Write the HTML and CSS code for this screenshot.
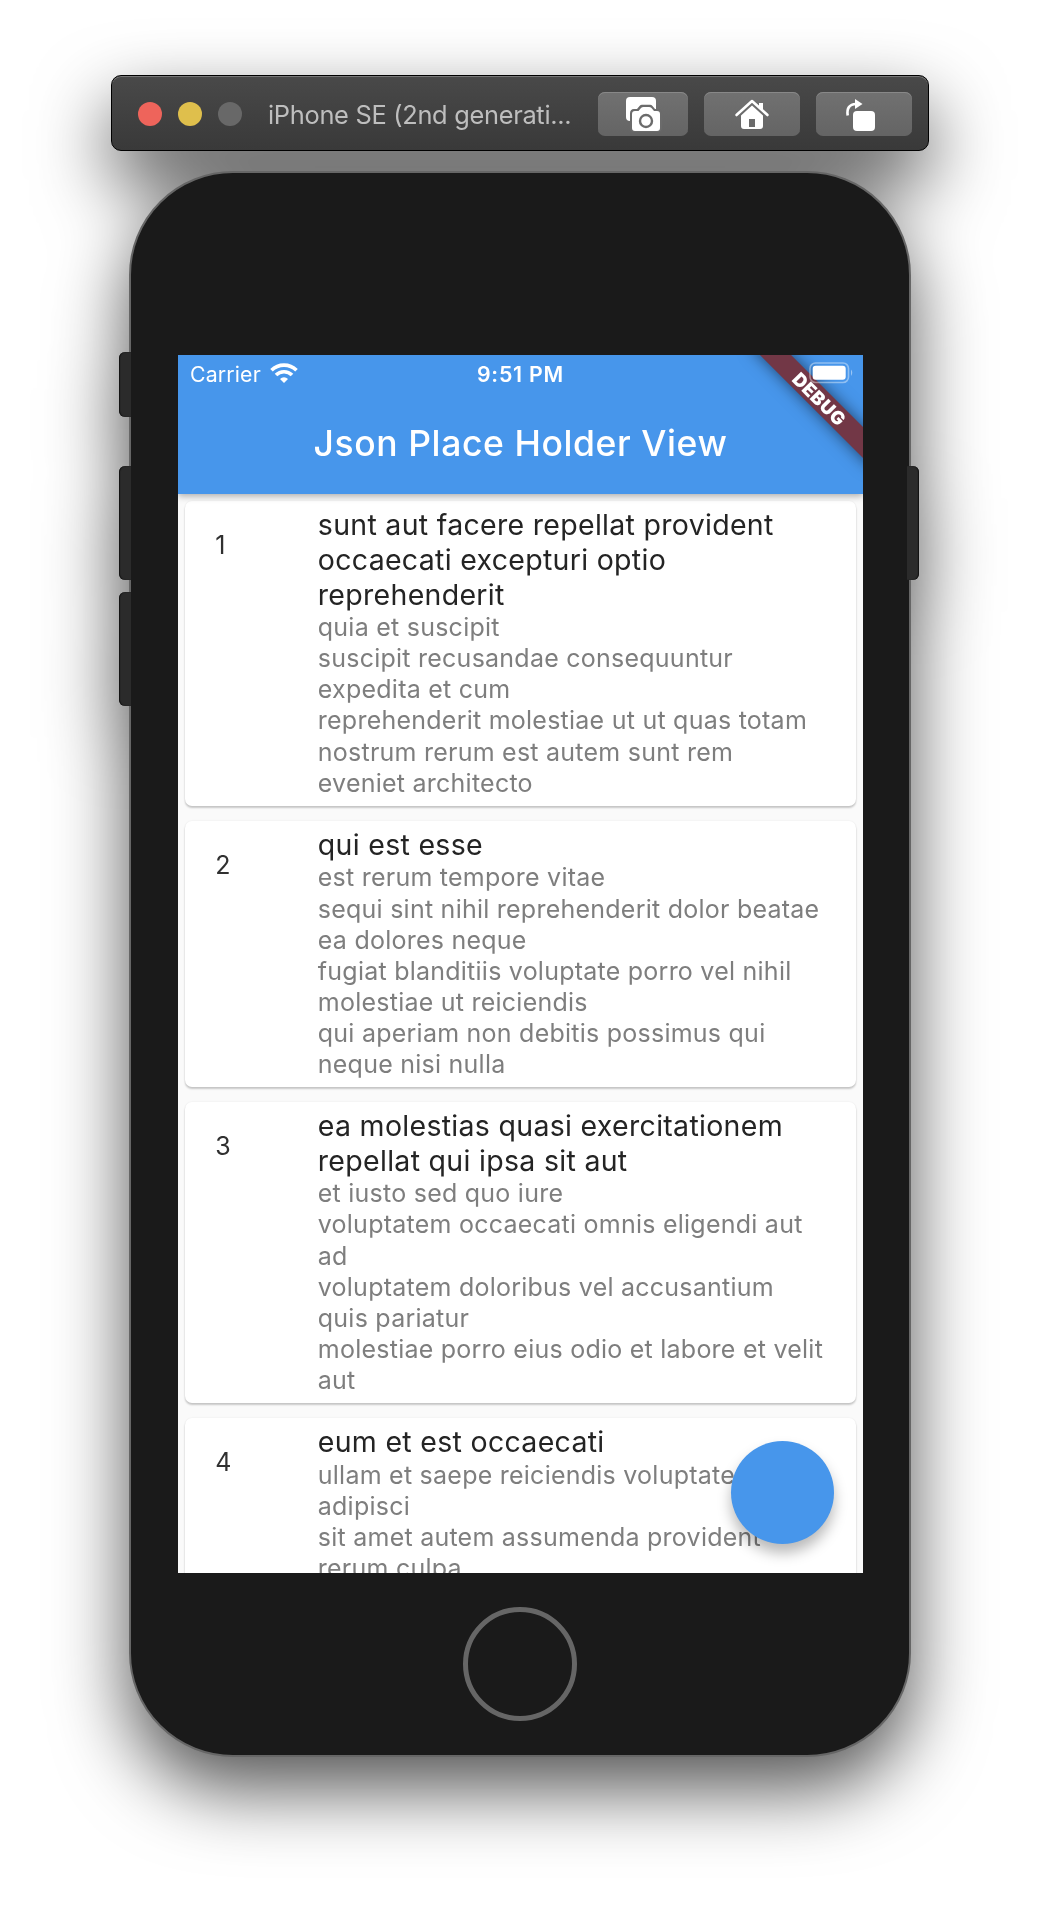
FILE: index.html
```html
<!DOCTYPE html>
<html lang="en">
<head>
<meta charset="utf-8">
<title>iPhone SE (2nd generation)</title>
<link rel="stylesheet" href="styles.css">
</head>
<body>
<main class="simulator">
  <header class="titlebar">
    <div class="lights"><i class="light red"></i><i class="light yellow"></i><i class="light"></i></div>
    <h1 class="window-title">iPhone SE (2nd generati...</h1>
    <div class="tools">
      <button class="tool narrow" aria-label="Screenshot">
        <svg width="90" height="44" viewBox="0 0 90 44">
          <rect x="28" y="5" width="30" height="24" rx="4" fill="#fff"/>
          <path class="camera-gap" d="M36 17h3l2.500-3q1-1.300 2.500-1.300h8q1.500 0 2.500 1.300l2.500 3H60q4 0 4 4V36q0 4-4 4H36q-4 0-4-4V21.500q0-4.500 4-4.500z"/>
          <path fill="#fff" d="M37 19h3.500l2.500-3q1-1 2.500-1h5.500q1.500 0 2.500 1l2.500 3H59q3 0 3 3v14q0 3-3 3H37q-3 0-3-3V22q0-3 3-3z"/>
          <circle class="lens" cx="48" cy="29" r="6"/>
        </svg>
      </button>
      <button class="tool" aria-label="Home">
        <svg width="96" height="44" viewBox="0 0 96 44">
          <path d="M32.500 23 48 9l15.500 14" fill="none" stroke="#fff" stroke-width="2.600" stroke-linecap="round" stroke-linejoin="round"/>
          <path fill="#fff" d="M55 11h4v8l-4-3.600zM48 13.500l11 10V34q0 3-3 3H40q-3 0-3-3V23.500z"/>
          <rect class="door" x="45" y="27" width="6" height="8"/>
        </svg>
      </button>
      <button class="tool" aria-label="Rotate">
        <svg width="96" height="44" viewBox="0 0 96 44">
          <rect x="37" y="19" width="22" height="20" rx="4" fill="#fff"/>
          <path d="M31.700 23.500Q30 12.500 40 12" fill="none" stroke="#fff" stroke-width="2.600"/>
          <path fill="#fff" d="M39 7l7.500 5-7.500 5z"/>
        </svg>
      </button>
    </div>
  </header>

  <section class="phone">
    <i class="key mute"></i><i class="key up"></i><i class="key down"></i><i class="key power"></i>
    <div class="screen">
      <div class="appbar">
        <div class="status">
          <div class="carrier"><span>Carrier</span>
            <svg width="28" height="21" viewBox="0 0 28 21">
              <g fill="none" stroke="#fff" stroke-width="3.600"><path d="M1.500 7.300a17.700 17.700 0 0 1 25 0"/><path d="M6 12a11.300 11.300 0 0 1 16 0"/></g>
              <path fill="#fff" d="M14 20l-4-4.100a5.700 5.700 0 0 1 8 0z"/>
            </svg>
          </div>
          <time>9:51 PM</time>
          <span class="status-end"></span>
        </div>
        <h2>Json Place Holder View</h2>
      </div>
      <div class="list">
        <article class="card"><span class="num">1</span><div>
          <h3>sunt aut facere repellat provident<br>occaecati excepturi optio<br>reprehenderit</h3>
          <p>quia et suscipit<br>suscipit recusandae consequuntur<br>expedita et cum<br>reprehenderit molestiae ut ut quas totam<br>nostrum rerum est autem sunt rem<br>eveniet architecto</p></div></article>
        <article class="card"><span class="num">2</span><div>
          <h3>qui est esse</h3>
          <p>est rerum tempore vitae<br>sequi sint nihil reprehenderit dolor beatae<br>ea dolores neque<br>fugiat blanditiis voluptate porro vel nihil<br>molestiae ut reiciendis<br>qui aperiam non debitis possimus qui<br>neque nisi nulla</p></div></article>
        <article class="card"><span class="num">3</span><div>
          <h3>ea molestias quasi exercitationem<br>repellat qui ipsa sit aut</h3>
          <p>et iusto sed quo iure<br>voluptatem occaecati omnis eligendi aut<br>ad<br>voluptatem doloribus vel accusantium<br>quis pariatur<br>molestiae porro eius odio et labore et velit<br>aut</p></div></article>
        <article class="card"><span class="num">4</span><div>
          <h3>eum et est occaecati</h3>
          <p>ullam et saepe reiciendis voluptatem<br>adipisci<br>sit amet autem assumenda provident<br>rerum culpa</p></div></article>
      </div>
      <div class="ribbon">DEBUG</div>
      <svg class="battery" width="45" height="22" viewBox="0 0 45 22">
        <rect x="1" y="1" width="38.500" height="19.500" rx="5.500" fill="none" stroke="#fff" stroke-opacity=".4" stroke-width="1.600"/>
        <rect x="3.700" y="3.700" width="33" height="14" rx="3" fill="#fff"/>
        <path d="M42 7.500q2.500 3.200 0 6.500z" fill="#fff" fill-opacity=".45"/>
      </svg>
      <button class="fab" aria-label="Add"></button>
    </div>
    <button class="home" aria-label="Home button"></button>
  </section>
</main>
</body>
</html>
```
FILE: styles.css
```css
* { box-sizing: border-box; }
body { margin: 0; background: #fff; font-family: Inter, "Liberation Sans", sans-serif; }
h1, h2, h3, p { margin: 0; font-weight: 400; }
button { border: 0; padding: 0; }
svg { display: block; }

.simulator {
  height: 1906px;
  padding-top: 75px;
  display: flex;
  flex-direction: column;
  align-items: center;
  gap: 20px;
  overflow: hidden;
  filter: drop-shadow(0 32px 37px rgba(0, 0, 0, .67));
}

.titlebar {
  width: 818px;
  height: 76px;
  flex: none;
  padding: 2px 16px 0 26px;
  display: flex;
  align-items: center;
  border: 1px solid #000;
  border-radius: 10px;
  background: linear-gradient(#494949, #393939);
  box-shadow: inset 0 1px #777;
}
.lights { display: flex; gap: 16px; }
.light { width: 24px; height: 24px; border-radius: 50%; background: #686868; }
.light.red { background: #ee645b; }
.light.yellow { background: #dfbf4c; }
.window-title { margin-left: 26px; padding-top: 1px; width: 330px; font-size: 25.4px; line-height: 40px; letter-spacing: -.3px; color: #bebebe; white-space: nowrap; }
.tools { display: flex; gap: 16px; }
.tool { width: 96px; height: 44px; border-radius: 7px; background: linear-gradient(#717171, #646464); box-shadow: inset 0 1px #888; }
.tool.narrow { width: 90px; }
.camera-gap { fill: #6b6b6b; }
.lens { fill: #fff; stroke: #6b6b6b; stroke-width: 2.4; }
.door { fill: #6b6b6b; }

.phone {
  position: relative;
  width: 782px;
  height: 1586px;
  flex: none;
  padding-top: 182px;
  display: flex;
  flex-direction: column;
  align-items: center;
  gap: 34px;
  border: 2px solid #666;
  border-radius: 104px;
  background: #1a1a1a;
}
.key { position: absolute; left: -12px; width: 12px; background: #2b2b2b; border-radius: 6px 0 0 6px; box-shadow: inset 1px 0 1px #111; }
.mute { top: 179px; height: 65px; }
.up { top: 293px; height: 114px; }
.down { top: 419px; height: 114px; }
.power { top: 293px; left: auto; right: -10px; height: 114px; border-radius: 0 6px 6px 0; box-shadow: inset -1px 0 1px #111; }

.screen { position: relative; left: .5px; width: 685px; height: 1218px; flex: none; overflow: hidden; background: #fafafa; }
.appbar { position: relative; height: 138.7px; background: #4796eb; color: #fff; box-shadow: 0 2px 7px rgba(0, 0, 0, .33); }
.status { height: 36.5px; padding: 1px 12px 0; display: grid; grid-template-columns: 1fr auto 1fr; align-items: center; font-size: 21.3px; letter-spacing: .15px; }
.carrier { display: flex; align-items: center; gap: 9px; }
.status time { font-weight: 600; letter-spacing: .8px; }
.appbar h2 { height: 102px; line-height: 103px; text-align: center; font-size: 35.5px; font-weight: 500; letter-spacing: .58px; }

.list { padding: 7.3px; display: flex; flex-direction: column; gap: 14.6px; }
.card { display: grid; grid-template-columns: 102.5px 1fr; padding: 7.3px 0 7.3px 30px; border-radius: 7px; background: #fff; box-shadow: 0 2px 2px rgba(0, 0, 0, .2), 0 0 2px rgba(0, 0, 0, .08); white-space: nowrap; }
.num { padding-top: 22px; font-size: 25px; line-height: 31px; color: #303030; }
.card h3 { font-size: 28.5px; line-height: 34.65px; color: #242424; letter-spacing: .3px; }
.card p { font-size: 25px; line-height: 31.07px; color: #7e7e7e; letter-spacing: .24px; }

.ribbon { position: absolute; top: 33px; left: 556px; width: 171px; height: 22px; line-height: 22px; transform: rotate(45deg); background: #723746; color: #fff; font-size: 18.4px; font-weight: 900; letter-spacing: .5px; text-align: center; box-shadow: 0 0 16px rgba(0, 0, 0, .55); }
.battery { position: absolute; left: 631px; top: 7px; }
.fab { position: absolute; left: 553px; top: 1086px; width: 103px; height: 103px; border-radius: 50%; background: #4796eb; box-shadow: 0 9px 14px rgba(0, 0, 0, .28); }
.home { width: 114px; height: 114px; flex: none; border: 5px solid #666; border-radius: 50%; background: transparent; }
```
